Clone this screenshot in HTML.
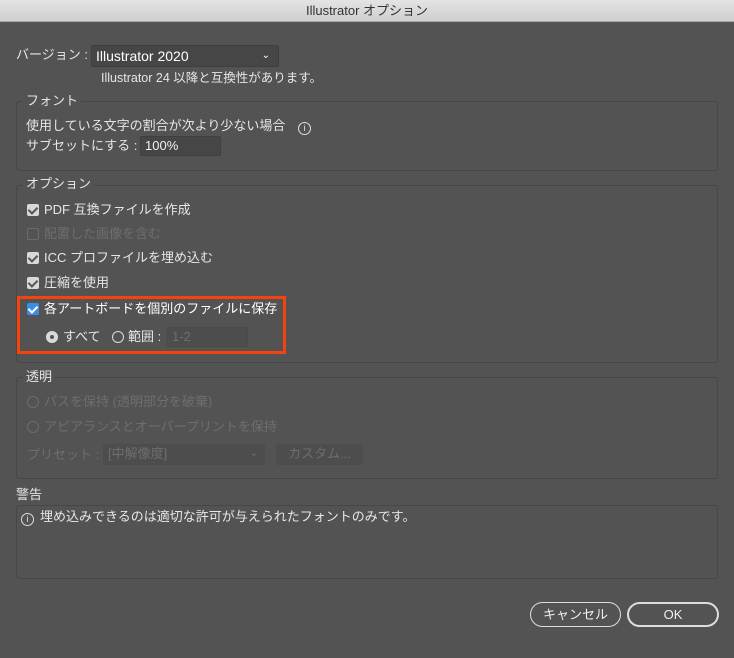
<!DOCTYPE html>
<html><head><meta charset="utf-8"><style>
*{margin:0;padding:0;box-sizing:border-box}
body{width:734px;height:658px;background:#535353;font-family:"Liberation Sans","Noto Sans CJK JP",sans-serif;font-size:13px;color:#e6e6e6;position:relative;overflow:hidden}
.a{position:absolute;white-space:nowrap;line-height:16px}
.title{position:absolute;left:0;top:0;width:734px;height:22px;background:linear-gradient(#e4e4e4,#cfcfcf);border-bottom:1px solid #a8a8a8;color:#333;text-align:center;line-height:22px;font-size:13px}
.box{position:absolute;border:1px solid #474747;border-radius:3px}
.lbl{position:absolute;background:#535353;padding:0 3px;line-height:14px}
.inp{position:absolute;background:#464646;border:1px solid #3f3f3f;border-radius:2px;color:#f0f0f0;padding-left:4px;line-height:18px}
.cb{position:absolute;width:12px;height:12px;background:#d8d8d8;border-radius:2px}
.cb::after{content:"";position:absolute;left:3px;top:1px;width:4px;height:7px;border:solid #555;border-width:0 2px 2px 0;transform:rotate(45deg)}
.cb.off{background:none;border:1px solid #6c6c6c}.cb.off::after{display:none}
.cb.blue{background:#3b8ee8}.cb.blue::after{border-color:#fff}
.rd{position:absolute;width:12px;height:12px;border-radius:50%;border:1px solid #ddd}
.dis{color:#6e6e6e}
.btn{position:absolute;border:1px solid #ddd;border-radius:13px;text-align:center;color:#f0f0f0;font-size:13px}
.i{display:inline-block;width:13px;height:13px;border:1px solid #ddd;border-radius:50%;font-size:9px;line-height:11px;text-align:center;vertical-align:-1px}
</style></head><body>
<div class="title">Illustrator オプション</div>

<div class="a" style="left:16px;top:47px;font-size:13px">バージョン :</div>
<div class="inp" style="left:91px;top:45px;width:188px;height:22px;font-size:14px;line-height:20px;color:#fff">Illustrator 2020<span style="position:absolute;right:8px;top:0;font-size:10px">⌄</span></div>
<div class="a" style="left:101px;top:70px;font-size:12.5px">Illustrator 24 以降と互換性があります。</div>

<div class="box" style="left:16px;top:101px;width:702px;height:70px"></div>
<div class="lbl" style="left:23px;top:94px">フォント</div>
<div class="a" style="left:26px;top:118px">使用している文字の割合が次より少ない場合 <span class="i" style="margin-left:9px">i</span></div>
<div class="a" style="left:26px;top:138px">サブセットにする :</div>
<div class="inp" style="left:140px;top:136px;width:81px;height:20px;font-size:13px">100%</div>

<div class="box" style="left:16px;top:185px;width:702px;height:178px"></div>
<div class="lbl" style="left:23px;top:177px">オプション</div>
<div class="cb" style="left:27px;top:204px"></div><div class="a" style="left:44px;top:202px">PDF 互換ファイルを作成</div>
<div class="cb off" style="left:27px;top:228px"></div><div class="a dis" style="left:44px;top:226px">配置した画像を含む</div>
<div class="cb" style="left:27px;top:252px"></div><div class="a" style="left:44px;top:250px">ICC プロファイルを埋め込む</div>
<div class="cb" style="left:27px;top:277px"></div><div class="a" style="left:44px;top:275px">圧縮を使用</div>
<div style="position:absolute;left:17px;top:296px;width:269px;height:58px;border:3px solid #f4430e"></div>
<div class="cb blue" style="left:27px;top:303px"></div><div class="a" style="left:44px;top:301px;color:#fff">各アートボードを個別のファイルに保存</div>
<div class="rd" style="left:46px;top:331px;background:#d8d8d8"><div style="position:absolute;left:3px;top:3px;width:4px;height:4px;border-radius:50%;background:#555"></div></div>
<div class="a" style="left:63px;top:329px">すべて</div>
<div class="rd" style="left:112px;top:331px"></div>
<div class="a" style="left:128px;top:329px">範囲 :</div>
<div class="inp dis" style="left:167px;top:327px;width:81px;height:20px;border-color:#4a4a4a;background:#4d4d4d">1-2</div>

<div class="box" style="left:16px;top:377px;width:702px;height:102px"></div>
<div class="lbl" style="left:23px;top:370px">透明</div>
<div class="rd" style="left:27px;top:396px;border-color:#6c6c6c"></div><div class="a dis" style="left:44px;top:394px">パスを保持 (透明部分を破棄)</div>
<div class="rd" style="left:27px;top:421px;border-color:#6c6c6c"></div><div class="a dis" style="left:44px;top:419px">アピアランスとオーバープリントを保持</div>
<div class="a dis" style="left:27px;top:447px">プリセット :</div>
<div class="inp dis" style="left:103px;top:444px;width:162px;height:21px;background:#4d4d4d;border-color:#4d4d4d">[中解像度]<span style="position:absolute;right:6px;font-size:10px">⌄</span></div>
<div class="inp dis" style="left:276px;top:444px;width:87px;height:21px;background:#4d4d4d;border-color:#4d4d4d;text-align:center;padding:0">カスタム...</div>

<div class="a" style="left:16px;top:487px">警告</div>
<div class="box" style="left:16px;top:505px;width:702px;height:74px"></div>
<div class="a" style="left:21px;top:509px"><span class="i" style="margin-right:6px">i</span>埋め込みできるのは適切な許可が与えられたフォントのみです。</div>

<div class="btn" style="left:530px;top:602px;width:91px;height:25px;line-height:23px">キャンセル</div>
<div class="btn" style="left:627px;top:602px;width:92px;height:25px;line-height:21px;border-width:2px">OK</div>
</body></html>
